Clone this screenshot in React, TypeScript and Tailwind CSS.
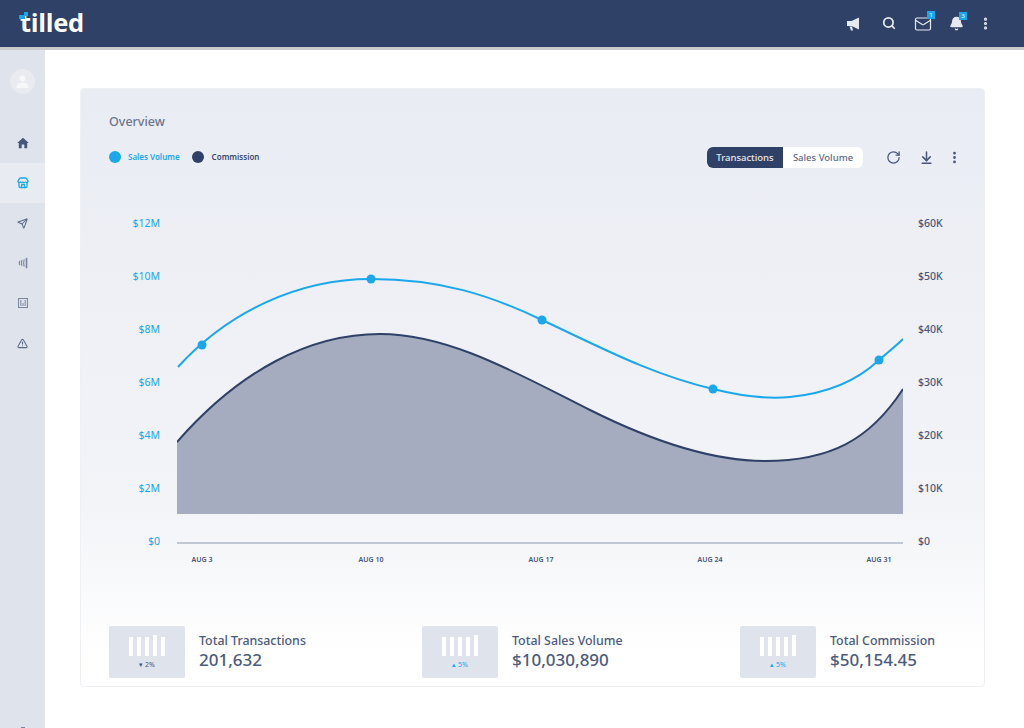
import { AlertTriangle, ArrowDownToLine, Bell, EllipsisVertical, Mail, RotateCw, Search, Send, Store } from 'lucide-react'

const font = "font-['Noto_Sans',sans-serif]"

const leftTicks = ['$12M', '$10M', '$8M', '$6M', '$4M', '$2M', '$0']
const rightTicks = ['$60K', '$50K', '$40K', '$30K', '$20K', '$10K', '$0']
const xTicks = [
  { label: 'AUG 3', x: 202 },
  { label: 'AUG 10', x: 371 },
  { label: 'AUG 17', x: 541 },
  { label: 'AUG 24', x: 710 },
  { label: 'AUG 31', x: 879 },
]

const bluePath =
  'M178 367 C 228 312, 298 279, 371 279 C 440 279, 490 295, 542 320 C 600 347, 650 374, 713 389 C 745 397, 770 399, 790 397 C 830 393, 858 380, 879 360 C 888 352, 896 346, 903 339'
const darkPath =
  'M177 442 C 240 370, 310 334, 380 334 C 450 334, 520 375, 590 410 C 650 440, 710 461, 765 461 C 830 461, 870 440, 903 389'

function MegaphoneIcon() {
  return (
    <svg width="15" height="15" viewBox="0 0 15 15" fill="currentColor">
      <path d="M1 5 H5.5 L13 1.5 V13.5 L5.5 10 H1 Z" />
      <path d="M3.5 10.5 H6 L7 14.5 H5 Z" />
    </svg>
  )
}

function HomeIcon() {
  return (
    <svg width="12" height="12" viewBox="0 0 12 12" fill="#47567a">
      <path d="M6 .8 L11.8 6 H10.2 V11.2 H7.3 V7.6 H4.7 V11.2 H1.8 V6 H.2 Z" />
    </svg>
  )
}

function SignalIcon() {
  return (
    <svg width="11" height="12" viewBox="0 0 11 12" fill="none" stroke="#7a859e" strokeWidth="1.1">
      <path d="M9.5 .8 V11.2" strokeWidth="1.6" />
      <path d="M7.2 2.4 Q6 6 7.2 9.6" />
      <path d="M5 3 Q3.8 6 5 9" />
      <path d="M2.8 3.8 Q1.8 6 2.8 8.2" />
    </svg>
  )
}

function ReportIcon() {
  return (
    <svg width="10" height="10" viewBox="0 0 10 10" fill="none" stroke="#7a859e" strokeWidth="1">
      <rect x=".5" y=".5" width="9" height="9" />
      <path d="M2.8 2 V8 M5 5 V8 M7.2 2 V8" />
    </svg>
  )
}

function NavItem({ icon, active }: { icon: React.ReactNode; active?: boolean }) {
  return (
    <div className={active ? 'h-10 flex items-center justify-center bg-[#e8ecf2]' : 'h-10 flex items-center justify-center'}>
      {icon}
    </div>
  )
}

function Badge({ n }: { n: string }) {
  return (
    <span className="absolute -top-[4px] -right-[3px] w-[8px] h-[8px] bg-[#1aa7ec] text-white text-[6px] leading-[8px] text-center">
      {n}
    </span>
  )
}

function Stat({ heights, delta, up, title, value }: { heights: string[]; delta: string; up?: boolean; title: string; value: string }) {
  return (
    <div className="flex items-center gap-[14px]">
      <div className="w-[76px] h-[52px] rounded-[2px] bg-[#dfe3ec] flex flex-col items-center pt-[9px]">
        <div className="flex items-end gap-[4px] h-[21px]">
          {heights.map((h, i) => (
            <div key={i} className={`w-[4px] bg-white ${h}`} />
          ))}
        </div>
        <div className={`mt-[4px] text-[7px] leading-[10px] ${up ? 'text-[#1aa7ec]' : 'text-[#4a5878]'}`}>
          {up ? '▴' : '▾'} {delta}
        </div>
      </div>
      <div className="text-[#4c5a7c] -mt-[3px]">
        <div className="text-[12.4px] leading-[17px] font-medium">{title}</div>
        <div className="text-[17px] leading-[21px] font-medium">{value}</div>
      </div>
    </div>
  )
}

export default function App() {
  return (
    <div className={`${font} w-[1024px] h-[728px] overflow-hidden bg-white flex flex-col`}>
      {/* Header */}
      <header className="h-[47px] shrink-0 bg-[#2f4166] flex items-center pl-[20px] pr-[31px]">
        <div className="relative text-white text-[25.5px] font-bold leading-none tracking-[-0.3px] font-['Open_Sans',sans-serif] -mt-[2px]">
          <span className="absolute -left-[1px] top-[5px] w-[6px] h-[4px] bg-[#1aa7ec]" />
          <span className="absolute left-[4px] top-[2px] w-[4px] h-[4px] bg-[#1aa7ec]" />
          tilled
        </div>
        <div className="ml-auto flex items-center text-[#e6e9ef]">
          <MegaphoneIcon />
          <Search size={14} strokeWidth={3} className="ml-[21px] -mt-[2px]" />
          <div className="relative ml-[18px] flex">
            <Mail size={18} strokeWidth={1.6} />
            <Badge n="1" />
          </div>
          <div className="relative ml-[17px] flex">
            <Bell size={15} fill="currentColor" />
            <Badge n="3" />
          </div>
          <EllipsisVertical size={15} strokeWidth={3} className="ml-[14px]" />
        </div>
      </header>
      <div className="h-[3px] shrink-0 bg-[#cbcbcd]" />

      <div className="flex-1 flex min-h-0">
        {/* Sidebar */}
        <aside className="w-[45px] shrink-0 bg-[#dfe3ec] flex flex-col">
          <div className="mt-[19px] mx-auto w-[25px] h-[25px] rounded-full bg-[#e9ebf1] flex items-center justify-center text-[#f6f7f9]">
            <svg width="15" height="15" viewBox="0 0 15 15" fill="currentColor">
              <circle cx="7.5" cy="4.5" r="3" />
              <path d="M1.5 14 C1.5 10, 4 8.5, 7.5 8.5 C11 8.5, 13.5 10, 13.5 14 Z" />
            </svg>
          </div>
          <div className="mt-[29px]">
            <NavItem icon={<HomeIcon />} />
            <NavItem active icon={<Store size={12} strokeWidth={2.6} className="text-[#1aa7ec]" />} />
            <NavItem icon={<Send size={11} strokeWidth={2.2} className="text-[#5d6a87]" />} />
            <NavItem icon={<SignalIcon />} />
            <NavItem icon={<ReportIcon />} />
            <NavItem icon={<AlertTriangle size={11} strokeWidth={2.2} className="text-[#5d6a87]" />} />
          </div>
          <div className="mt-auto mb-[-3px] mx-auto w-[4px] h-[4px] bg-[#7a859e]" />
        </aside>

        {/* Main */}
        <main className="flex-1 pl-[35px] pr-[39px] pt-[38px]">
          <section className="h-[599px] rounded-[4px] border border-[#eef0f4] bg-gradient-to-b from-[#e9ecf3] via-[#f3f4f8] via-70% to-white to-[95%] px-[28px] pt-[24px] flex flex-col">
            <h2 className="text-[#6a7690] text-[12.5px] leading-[18px] font-medium">Overview</h2>

            <div className="mt-[14px] flex items-center h-[24px] text-[8px] font-semibold">
              <span className="w-[12px] h-[12px] rounded-full bg-[#1aa7ec]" />
              <span className="ml-[7px] text-[#1aa7ec]">Sales Volume</span>
              <span className="ml-[12px] w-[12px] h-[12px] rounded-full bg-[#2f4166]" />
              <span className="ml-[8px] text-[#3b4a6b]">Commission</span>
              <div className="ml-auto flex h-[21px] rounded-[6px] overflow-hidden bg-white text-[9.5px] font-medium leading-[21px]">
                <span className="w-[76px] text-center bg-[#2f4166] text-[#e6e9ef]">Transactions</span>
                <span className="w-[80px] text-center text-[#5d6a87]">Sales Volume</span>
              </div>
              <div className="ml-[23px] mr-[-6px] flex items-center text-[#47567a]">
                <RotateCw size={15} />
                <ArrowDownToLine size={15} strokeWidth={2.4} className="ml-[18px]" />
                <EllipsisVertical size={15} strokeWidth={2.5} className="ml-[13px]" />
              </div>
            </div>

            {/* Chart */}
            <div className="mt-[47px] flex items-start h-[350px] ml-[-12px]">
              <div className="w-[63px] h-[332px] flex flex-col justify-between text-right text-[10.5px] leading-[14px] text-[#1aa7ec]">
                {leftTicks.map((t) => (
                  <span key={t}>{t}</span>
                ))}
              </div>
              <div className="ml-[17px] w-[726px] h-[350px] shrink-0">
                <svg width="726" height="350" viewBox="177 216 726 350">
                  <path d={`${darkPath} L903 514 L177 514 Z`} fill="#a5acbf" />
                  <path d={darkPath} fill="none" stroke="#2f4166" strokeWidth="2" />
                  <path d={bluePath} fill="none" stroke="#1aa7ec" strokeWidth="2" />
                  {[
                    [202, 345],
                    [371, 279],
                    [542, 320],
                    [713, 389],
                    [879, 360],
                  ].map(([cx, cy]) => (
                    <circle key={cx} cx={cx} cy={cy} r="4.5" fill="#1aa7ec" />
                  ))}
                  <line x1="177" x2="903" y1="543" y2="543" stroke="#8e97ae" strokeWidth="1.2" />
                  {xTicks.map((t) => (
                    <text key={t.label} x={t.x} y="562" textAnchor="middle" fontSize="7" fontWeight="600" fill="#47567a">
                      {t.label}
                    </text>
                  ))}
                </svg>
              </div>
              <div className="ml-[15px] h-[332px] flex flex-col justify-between text-[10.5px] leading-[14px] font-medium text-[#47567a]">
                {rightTicks.map((t) => (
                  <span key={t}>{t}</span>
                ))}
              </div>
            </div>

            {/* Totals */}
            <div className="mt-[60px] grid grid-cols-[313px_318px_1fr]">
              <Stat heights={['h-[19px]', 'h-[19px]', 'h-[19px]', 'h-[21px]', 'h-[19px]']} delta="2%" title="Total Transactions" value="201,632" />
              <Stat heights={['h-[19px]', 'h-[19px]', 'h-[19px]', 'h-[19px]', 'h-[21px]']} delta="5%" up title="Total Sales Volume" value="$10,030,890" />
              <Stat heights={['h-[19px]', 'h-[19px]', 'h-[19px]', 'h-[19px]', 'h-[21px]']} delta="5%" up title="Total Commission" value="$50,154.45" />
            </div>
          </section>
        </main>
      </div>
    </div>
  )
}
